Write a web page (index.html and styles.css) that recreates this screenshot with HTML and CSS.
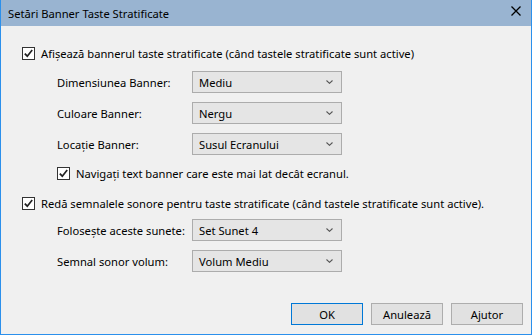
FILE: index.html
```html
<!DOCTYPE html>
<html>

<head>
    <meta charset="utf-8">
    <link rel="stylesheet" href="styles.css">
</head>

<body>
    <div class="window">
        <div class="titlebar">
            <span class="title">Setări Banner Taste Stratificate</span>
            <svg class="close" width="10" height="10" viewBox="0 0 10 10">
                <path d="M0.5 0.5 L9.5 9.5 M9.5 0.5 L0.5 9.5" stroke="#000" stroke-width="1.3" fill="none" />
            </svg>
        </div>

        <div class="content">
            <div class="check-row">
                <span class="box">
                    <svg width="11" height="11" viewBox="0 0 11 11">
                        <path d="M1.8 5.6 L4.3 8.2 L9.2 2" stroke="#222" stroke-width="1.7" fill="none" />
                    </svg>
                </span>
                Afișează bannerul taste stratificate (când tastele stratificate sunt active)
            </div>

            <div class="field-row first">
                <span class="label">Dimensiunea Banner:</span>
                <div class="combo"><span>Mediu</span><svg class="chev" width="7" height="4" viewBox="0 0 7 4"><path d="M0.5 0.5 L3.5 3.3 L6.5 0.5" stroke="#555" stroke-width="1.1" fill="none" /></svg></div>
            </div>
            <div class="field-row">
                <span class="label">Culoare Banner:</span>
                <div class="combo"><span>Nergu</span><svg class="chev" width="7" height="4" viewBox="0 0 7 4"><path d="M0.5 0.5 L3.5 3.3 L6.5 0.5" stroke="#555" stroke-width="1.1" fill="none" /></svg></div>
            </div>
            <div class="field-row">
                <span class="label">Locație Banner:</span>
                <div class="combo"><span>Susul Ecranului</span><svg class="chev" width="7" height="4" viewBox="0 0 7 4"><path d="M0.5 0.5 L3.5 3.3 L6.5 0.5" stroke="#555" stroke-width="1.1" fill="none" /></svg></div>
            </div>

            <div class="check-row nested">
                <span class="box">
                    <svg width="11" height="11" viewBox="0 0 11 11">
                        <path d="M1.8 5.6 L4.3 8.2 L9.2 2" stroke="#222" stroke-width="1.7" fill="none" />
                    </svg>
                </span>
                Navigați text banner care este mai lat decât ecranul.
            </div>

            <div class="check-row second">
                <span class="box">
                    <svg width="11" height="11" viewBox="0 0 11 11">
                        <path d="M1.8 5.6 L4.3 8.2 L9.2 2" stroke="#222" stroke-width="1.7" fill="none" />
                    </svg>
                </span>
                Redă semnalele sonore pentru taste stratificate (când tastele stratificate sunt active).
            </div>

            <div class="field-row after-check">
                <span class="label">Folosește aceste sunete:</span>
                <div class="combo"><span>Set Sunet 4</span><svg class="chev" width="7" height="4" viewBox="0 0 7 4"><path d="M0.5 0.5 L3.5 3.3 L6.5 0.5" stroke="#555" stroke-width="1.1" fill="none" /></svg></div>
            </div>
            <div class="field-row">
                <span class="label">Semnal sonor volum:</span>
                <div class="combo"><span>Volum Mediu</span><svg class="chev" width="7" height="4" viewBox="0 0 7 4"><path d="M0.5 0.5 L3.5 3.3 L6.5 0.5" stroke="#555" stroke-width="1.1" fill="none" /></svg></div>
            </div>
        </div>

        <div class="buttons">
            <button class="default">OK</button>
            <button>Anulează</button>
            <button>Ajutor</button>
        </div>
    </div>
</body>

</html>
```

FILE: styles.css
```css
* {
    box-sizing: border-box;
    font-family: 'Noto Sans', 'Open Sans', sans-serif;
}

html,
body {
    margin: 0;
    background-color: #f0f0f0;
}

.window {
    width: 532px;
    height: 335px;
    border: 1px solid #2b90ec;
    border-top: none;
    background-color: #f0f0f0;
    display: flex;
    flex-direction: column;
    font-size: 11.2px;
    color: #000;
}

.titlebar {
    height: 26px;
    background-color: #99b4d1;
    display: flex;
    align-items: center;
    justify-content: space-between;
    padding: 0 10px 2px 7px;
}

.title {
    font-size: 11.2px;
    padding-top: 3px;
}

.close {
    margin-bottom: 3px;
}

.content {
    padding: 17px 0 0 21px;
}

.check-row {
    height: 20px;
    display: flex;
    align-items: center;
    gap: 6px;
    white-space: nowrap;
}

.check-row.nested {
    margin-top: 8px;
    padding-left: 35px;
}

.check-row.second {
    margin-top: 10px;
}

.box {
    width: 13px;
    height: 13px;
    border: 1px solid #333;
    background-color: #fff;
    display: flex;
    align-items: center;
    justify-content: center;
    flex: none;
}

.field-row {
    height: 22px;
    margin-top: 9px;
    padding-left: 35px;
    display: flex;
    align-items: center;
    white-space: nowrap;
}

.field-row.first {
    margin-top: 8px;
}

.field-row.after-check {
    margin-top: 6px;
}

.label {
    width: 135px;
    flex: none;
}

.combo {
    width: 150px;
    height: 22px;
    border: 1px solid #acacac;
    background-color: #e5e5e5;
    display: flex;
    align-items: center;
    justify-content: space-between;
    padding: 0 8px 0 6px;
}

.buttons {
    margin-top: auto;
    display: flex;
    justify-content: flex-end;
    gap: 8px;
    padding: 0 8px 9px 0;
}

button {
    width: 72px;
    height: 22px;
    border: 1px solid #adadad;
    background-color: #e1e1e1;
    font-size: 11.2px;
    padding: 0;
    color: #000;
}

button.default {
    border-color: #0078d7;
}
```
